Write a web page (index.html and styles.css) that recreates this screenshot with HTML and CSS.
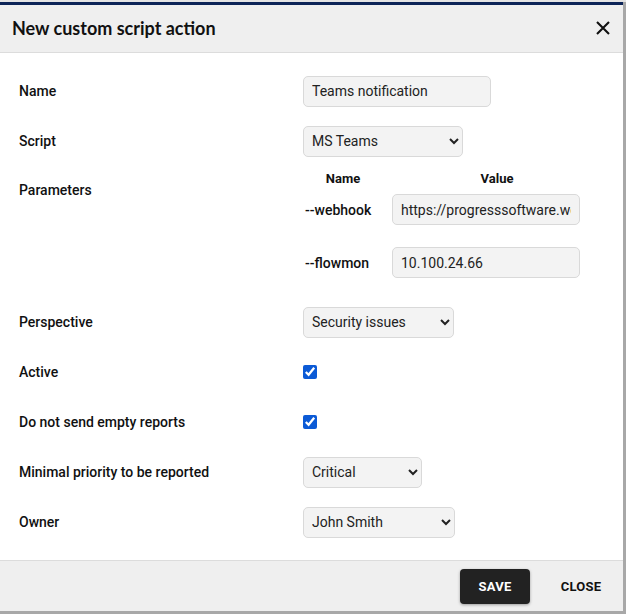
FILE: index.html
```html
<!DOCTYPE html>
<html>
<head>
<meta charset="utf-8">
<link rel="stylesheet" href="styles.css">
</head>
<body>
<div class="backdrop-top"></div>
<div class="dialog">
  <div class="dialog-header">
    <h1 class="dialog-title">New custom script action</h1>
    <button class="icon-close" aria-label="Close">
      <svg width="14" height="14" viewBox="0 0 14 14"><path d="M1 1 L13 13 M13 1 L1 13" stroke="#111" stroke-width="2.1" fill="none"/></svg>
    </button>
  </div>
  <div class="dialog-body">
    <div class="row">
      <div class="label">Name</div>
      <div class="control"><input class="field w188" type="text" value="Teams notification"></div>
    </div>
    <div class="row">
      <div class="label">Script</div>
      <div class="control"><select class="field w160"><option>MS Teams</option></select></div>
    </div>
    <div class="row row-params">
      <div class="label label-top">Parameters</div>
      <div class="params">
        <div class="params-head">
          <div class="pcol1">Name</div>
          <div class="pcol2">Value</div>
        </div>
        <div class="params-row">
          <div class="pcol1 pname">--webhook</div>
          <div class="pcol2"><input class="field w188" type="text" value="https://progresssoftware.webhook.office.com/webhookb2/"></div>
        </div>
        <div class="params-row second">
          <div class="pcol1 pname">--flowmon</div>
          <div class="pcol2"><input class="field w188" type="text" value="10.100.24.66"></div>
        </div>
      </div>
    </div>
    <div class="row">
      <div class="label">Perspective</div>
      <div class="control"><select class="field w151"><option>Security issues</option></select></div>
    </div>
    <div class="row">
      <div class="label">Active</div>
      <div class="control"><input class="check" type="checkbox" checked></div>
    </div>
    <div class="row">
      <div class="label">Do not send empty reports</div>
      <div class="control"><input class="check" type="checkbox" checked></div>
    </div>
    <div class="row">
      <div class="label">Minimal priority to be reported</div>
      <div class="control"><select class="field w119"><option>Critical</option></select></div>
    </div>
    <div class="row">
      <div class="label">Owner</div>
      <div class="control"><select class="field w152"><option>John Smith</option></select></div>
    </div>
  </div>
  <div class="dialog-footer">
    <button class="btn btn-primary">SAVE</button>
    <button class="btn btn-text">CLOSE</button>
  </div>
</div>
</body>
</html>
```
FILE: styles.css
```css
* { box-sizing: border-box; }
html, body { margin: 0; padding: 0; }
body {
  width: 626px;
  height: 614px;
  background: #a8a8a8;
  overflow: hidden;
  font-family: Roboto, "Liberation Sans", sans-serif;
  color: #111;
}
.backdrop-top {
  height: 2px;
  background: #e4e4e4;
}
.dialog {
  width: 623px;
  background: #fff;
  border-top: 3px solid #0c2457;
}
.dialog-header {
  height: 48px;
  background: #efefef;
  border-bottom: 1px solid #dcdcdc;
  display: flex;
  align-items: center;
  justify-content: space-between;
  padding: 0 12px 2px 12px;
}
.dialog-title {
  margin: 0;
  font-family: Lato, "Open Sans", sans-serif;
  font-weight: 700;
  font-size: 18px;
  color: #111;
}
.icon-close {
  border: 0;
  background: transparent;
  padding: 0;
  width: 14px;
  height: 14px;
  display: flex;
  margin-right: 1px;
}
.dialog-body {
  height: 507px;
  padding: 13px 0 13px 19px;
}
.row {
  display: flex;
  height: 50px;
  align-items: center;
}
.row-params {
  height: 131px;
  align-items: flex-start;
}
.label {
  width: 284px;
  font-size: 14px;
  font-weight: 500;
  line-height: 20px;
  color: #111;
}
.label-top { padding-top: 14px; }
.control { display: flex; align-items: center; }
.field {
  height: 31px;
  border: 1px solid #d9d9d9;
  border-radius: 5px;
  background: #f3f3f3;
  font-family: Roboto, "Liberation Sans", sans-serif;
  font-size: 14px;
  color: #222;
  padding: 0 8px;
  outline: none;
}
select.field { padding: 0 4px; }
.w188 { width: 188px; }
.w160 { width: 160px; }
.w151 { width: 151px; }
.w119 { width: 119px; }
.w152 { width: 152px; }
.params { display: flex; flex-direction: column; }
.params-head {
  display: flex;
  height: 24px;
  align-items: center;
  font-size: 13px;
  font-weight: 700;
  gap: 9px;
}
.params-head .pcol1, .params-head .pcol2 { text-align: center; }
.pcol1 { width: 80px; }
.pcol2 { width: 210px; }
.params-row {
  display: flex;
  align-items: center;
  gap: 9px;
  margin-top: 4px;
}
.params-row.second { margin-top: 22px; }
.pname {
  font-size: 14px;
  font-weight: 500;
  padding-left: 2px;
}
.check {
  width: 14px;
  height: 14px;
  margin: 0;
  accent-color: #0b5ad6;
}
.dialog-footer {
  height: 51px;
  background: #efefef;
  border-top: 1px solid #dcdcdc;
  display: flex;
  align-items: center;
  justify-content: flex-end;
  gap: 16px;
  padding: 0 7px 0 0;
}
.btn {
  height: 35px;
  width: 70px;
  border: 0;
  border-radius: 4px;
  font-family: Roboto, "Liberation Sans", sans-serif;
  font-size: 13px;
  font-weight: 700;
  letter-spacing: 0.2px;
  background: transparent;
  color: #111;
  padding: 0;
}
.btn-primary {
  background: #222;
  color: #fff;
  box-shadow: 0 1px 3px rgba(0,0,0,0.35);
}
```
